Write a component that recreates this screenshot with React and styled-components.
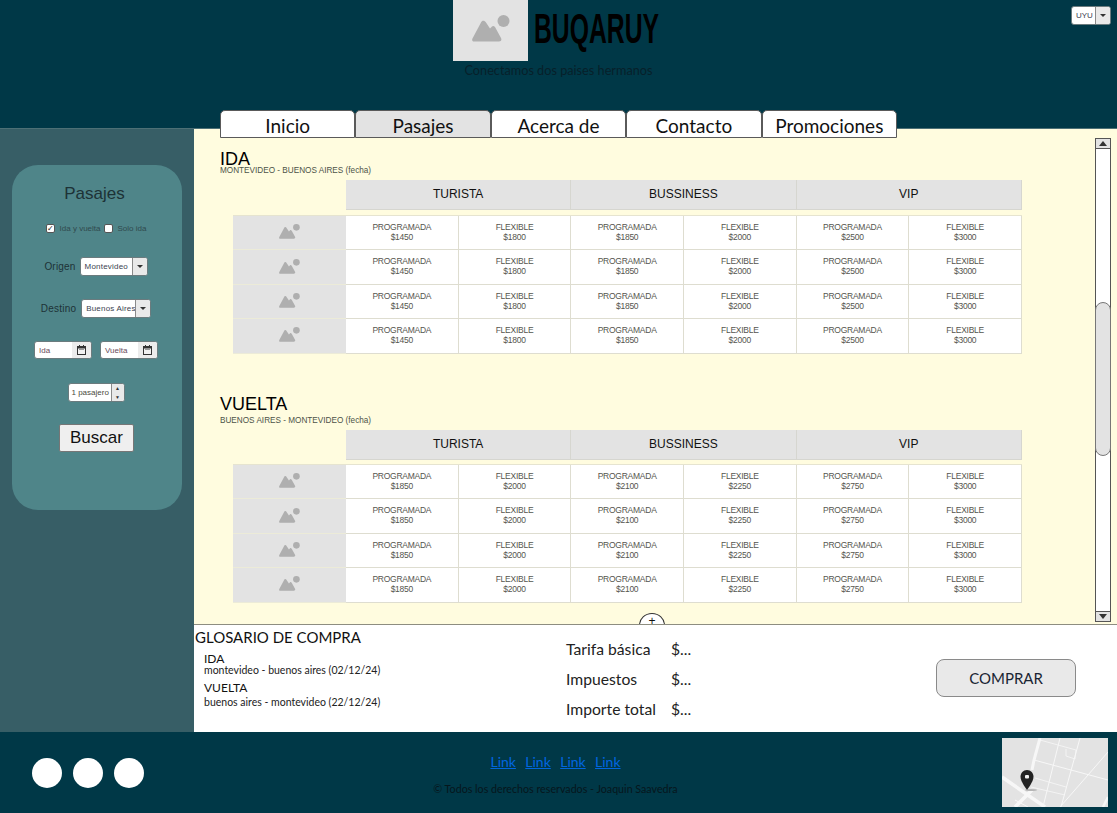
import React from "react";
import styled, { createGlobalStyle } from "styled-components";

const GlobalStyle = createGlobalStyle`
  html, body {
    margin: 0;
    padding: 0;
    background: #ffffff;
  }
  * {
    box-sizing: border-box;
  }
`;

const SPARTAN = `"Lato", "Noto Sans", sans-serif`;
const ARIAL = `"Liberation Sans", Arial, sans-serif`;

const Page = styled.div`
  width: 1117px;
  height: 813px;
  display: grid;
  grid-template-rows: 129px 603px 81px;
  overflow: hidden;
`;

const Header = styled.header`
  position: relative;
  background: #003847;
  border-bottom: 1px solid #4d7076;
  display: flex;
  flex-direction: column;
  align-items: center;
`;
const Brand = styled.div`
  display: flex;
  margin-right: 4px;
  height: 61px;
`;
const LogoBox = styled.div`
  width: 75px;
  height: 61px;
  background: #e3e3e3;
  display: flex;
  align-items: center;
  justify-content: center;
  padding: 0 0 4px 1px;
`;
const BrandName = styled.div`
  font-family: ${ARIAL};
  font-weight: 700;
  font-size: 43px;
  line-height: 57px;
  color: #000;
  margin-left: 6px;
  width: 126px;
  white-space: nowrap;
  transform: scaleX(0.575);
  transform-origin: left center;
`;
const Slogan = styled.div`
  font-family: ${SPARTAN};
  font-size: 12.7px;
  line-height: 14px;
  margin-top: 2px;
  color: #07202a;
`;
const Tabs = styled.nav`
  position: absolute;
  left: 220px;
  bottom: -10px;
  display: flex;
  z-index: 2;
`;
const Tab = styled.div`
  width: 135.4px;
  height: 28px;
  background: ${(p) => (p.$active ? "#e3e3e3" : "#ffffff")};
  border: 1px solid #5a5a5a;
  border-radius: 5px 5px 0 0;
  font-family: ${SPARTAN};
  font-size: 19px;
  line-height: 29px;
  text-align: center;
  color: #111;
`;
const SelectBox = styled.div`
  display: inline-flex;
  height: 19px;
  width: ${(p) => p.$w}px;
  border: 1px solid #6b7b7e;
  border-radius: 3px;
  background: #fff;
  overflow: hidden;
  font-family: ${ARIAL};
  font-size: 8px;
  color: #3b3f50;
`;
const SelectText = styled.span`
  flex: 1;
  min-width: 0;
  white-space: nowrap;
  overflow: hidden;
  padding-left: 4px;
  line-height: 17px;
`;
const SelectArrow = styled.span`
  width: 15px;
  flex: none;
  background: #e9e9e9;
  border-left: 1px solid #8a8a8a;
  display: flex;
  align-items: center;
  justify-content: center;
  &::after {
    content: "";
    border-left: 3px solid transparent;
    border-right: 3px solid transparent;
    border-top: 3px solid #333;
  }
`;
const Currency = styled.div`
  position: absolute;
  top: 6px;
  right: 6px;
  display: flex;
`;

const Middle = styled.div`
  display: grid;
  grid-template-columns: 194px 1fr;
  min-height: 0;
`;
const Aside = styled.aside`
  background: #375e66;
  padding: 36px 12px 0;
`;
const SearchCard = styled.div`
  height: 345px;
  background: #4f8589;
  border-radius: 26px;
  padding-right: 2px;
  display: flex;
  flex-direction: column;
  align-items: center;
  font-family: ${ARIAL};
  color: #1d3236;
`;
const CardTitle = styled.div`
  font-size: 17px;
  line-height: 20px;
  margin: 19px 3px 0 0;
`;
const TripType = styled.div`
  display: flex;
  align-items: center;
  font-size: 8px;
  margin-top: 19px;
  height: 10px;
  color: #2f4a4e;
`;
const CheckBox = styled.span`
  width: 9px;
  height: 9px;
  border: 1px solid #555;
  border-radius: 2px;
  background: #fff;
  font-size: 8px;
  line-height: 7px;
  text-align: center;
  color: #222;
  margin: 0 5px 0 ${(p) => p.$before || 0}px;
`;
const FieldRow = styled.div`
  display: flex;
  align-items: center;
  gap: ${(p) => p.$gap || 4}px;
  font-size: 10px;
  margin-top: ${(p) => p.$top}px;
  letter-spacing: 0.2px;
`;
const DateBox = styled.div`
  display: flex;
  align-items: center;
  width: 58px;
  height: 18px;
  border: 1px solid #6b7b7e;
  border-radius: 3px;
  background: #fff;
  overflow: hidden;
  font-size: 8px;
  color: #6a4a5a;
  letter-spacing: 0;
`;
const DateLabel = styled.span`
  flex: 1;
  padding-left: 4px;
`;
const DateIcon = styled.span`
  width: 19px;
  height: 100%;
  background: #ececec;
  display: flex;
  align-items: center;
  justify-content: center;
`;
const Spinner = styled.div`
  display: flex;
  width: 57px;
  height: 19px;
  border: 1px solid #6b7b7e;
  border-radius: 3px;
  background: #fff;
  overflow: hidden;
  font-size: 8px;
  line-height: 17px;
  color: #4a4a40;
  letter-spacing: 0;
`;
const SpinnerText = styled.span`
  flex: 1;
  padding-left: 3px;
  white-space: nowrap;
`;
const SpinnerArrows = styled.span`
  width: 13px;
  background: #e9e9e9;
  border-left: 1px solid #8a8a8a;
  display: grid;
  grid-template-rows: 1fr 1fr;
  font-size: 5px;
  line-height: 8px;
  text-align: center;
  color: #333;
`;
const SearchButton = styled.div`
  width: 75px;
  height: 28px;
  margin-top: 22px;
  margin-left: 1px;
  background: #efefef;
  border: 1px solid #767676;
  border-radius: 2px;
  font-size: 17px;
  line-height: 26px;
  text-align: center;
  color: #111;
`;

const Main = styled.main`
  display: grid;
  grid-template-rows: 496px 107px;
  min-height: 0;
`;
const Content = styled.section`
  position: relative;
  background: #fffcdf;
  border-bottom: 1px solid #8d8d80;
  padding: 23px 0 0 26px;
  font-family: ${ARIAL};
  overflow: hidden;
`;
const TripSection = styled.div`
  height: 245px;
`;
const TripTitle = styled.div`
  font-size: 18px;
  line-height: 14px;
  color: #000;
`;
const TripRoute = styled.div`
  font-size: 8.2px;
  line-height: 9px;
  color: #4c5248;
  margin-top: ${(p) => p.$top}px;
`;
const ClassHeader = styled.div`
  display: grid;
  grid-template-columns: repeat(3, 225.3px);
  margin: 5px 0 0 126px;
  height: 29px;
`;
const ClassCell = styled.div`
  background: #e3e3e3;
  border-right: 1px solid #d6d6d0;
  border-bottom: 1px solid #d6d6d0;
  font-size: 12px;
  line-height: 29px;
  text-align: center;
  color: #111;
`;
const FareTable = styled.div`
  margin: ${(p) => p.$top}px 0 0 13px;
  width: 789px;
  border-top: 1px solid #e6e4d0;
`;
const FareRow = styled.div`
  display: grid;
  grid-template-columns: 113px repeat(6, 1fr);
  height: 34.4px;
`;
const RowImage = styled.div`
  background: #e3e3e3;
  border-bottom: 1px solid #ecebd8;
  display: flex;
  align-items: center;
  justify-content: center;
  padding-bottom: 2px;
`;
const FareCell = styled.div`
  background: #fff;
  border-right: 1px solid #deddd0;
  border-bottom: 1px solid #deddd0;
  font-size: 8.5px;
  letter-spacing: -0.25px;
  line-height: 10px;
  padding-top: 6px;
  text-align: center;
  color: #55554e;
`;
const Scrollbar = styled.div`
  position: absolute;
  top: 9px;
  left: 901px;
  width: 16px;
  height: 484px;
  background: #fff;
  border: 1px solid #555;
  display: flex;
  flex-direction: column;
  justify-content: space-between;
`;
const ScrollButton = styled.div`
  height: 10px;
  background: #e3e3e3;
  border-top: ${(p) => (p.$down ? "1px solid #555" : "0")};
  border-bottom: ${(p) => (p.$down ? "0" : "1px solid #555")};
  display: flex;
  align-items: center;
  justify-content: center;
  &::after {
    content: "";
    border-left: 4px solid transparent;
    border-right: 4px solid transparent;
    border-top: ${(p) => (p.$down ? "5px solid #333" : "0")};
    border-bottom: ${(p) => (p.$down ? "0" : "5px solid #333")};
  }
`;
const ScrollThumb = styled.div`
  position: absolute;
  top: 163px;
  left: -1px;
  width: 16px;
  height: 154px;
  border: 1px solid #777;
  border-radius: 8px;
  background: #e3e3e3;
`;
const MoreButton = styled.div`
  position: absolute;
  left: 445px;
  top: 484px;
  width: 26px;
  height: 24px;
  padding-top: 4px;
  border: 1px solid #333;
  border-radius: 50%;
  background: #fff;
  font-size: 12px;
  line-height: 6px;
  text-align: center;
  color: #111;
`;

const Summary = styled.section`
  background: #fff;
  display: grid;
  grid-template-columns: 372px 370px 1fr;
  font-family: ${SPARTAN};
  color: #111;
`;
const Glossary = styled.div`
  padding: 4px 0 0 1px;
`;
const GlossaryTitle = styled.div`
  font-size: 15px;
  line-height: 17px;
`;
const GlossaryList = styled.div`
  padding: 5px 0 0 9px;
`;
const LegName = styled.div`
  font-size: 12px;
  line-height: 15px;
`;
const LegDetail = styled.div`
  font-size: 10.5px;
  line-height: 11px;
  margin-top: ${(p) => p.$top}px;
  margin-bottom: 4px;
  color: #222;
`;
const Totals = styled.div`
  display: grid;
  grid-template-columns: 105px auto;
  grid-auto-rows: 30px;
  padding-top: 9px;
  font-size: 15.7px;
  line-height: 30px;
  color: #222;
`;
const BuyColumn = styled.div`
  display: flex;
  justify-content: flex-start;
  padding-top: 34px;
`;
const BuyButton = styled.div`
  width: 140px;
  height: 38px;
  background: #e9e9e9;
  border: 1px solid #8a8a8a;
  border-radius: 8px;
  font-size: 15px;
  line-height: 37px;
  text-align: center;
  color: #1a2533;
`;

const Footer = styled.footer`
  background: #003847;
  display: grid;
  grid-template-columns: 372px 1fr 115px;
  font-family: ${SPARTAN};
`;
const Socials = styled.div`
  display: flex;
  gap: 11px;
  padding: 26px 0 0 32px;
`;
const SocialDot = styled.span`
  width: 30px;
  height: 30px;
  border-radius: 50%;
  background: #fff;
`;
const FooterCenter = styled.div`
  text-align: center;
  padding-top: 21px;
  width: 370px;
`;
const FooterLinks = styled.div`
  display: flex;
  justify-content: center;
  gap: 9.4px;
  margin-left: -3px;
`;
const FooterLink = styled.a`
  font-size: 14px;
  line-height: 18px;
  color: #0066e0;
  text-decoration: underline;
`;
const Copyright = styled.div`
  font-size: 10.7px;
  line-height: 12px;
  margin: 12px 0 0 -3px;
  color: #06161c;
`;
const MapBox = styled.div`
  width: 106px;
  height: 69px;
  margin-top: 6px;
  background: #e3e3e3;
  overflow: hidden;
  line-height: 0;
`;

const PlaceholderIcon = ({ width, color = "#afafaf" }) => (
  <svg width={width} viewBox="0 0 38 27" fill={color}>
    <circle cx="31.5" cy="6" r="6" />
    <path d="M1 22.5 9 7.500C10 5 12.500 5 14 7.500l4 6 2-2c1-1 2-.5 3 .5l6 11c1 2 0 3.500-2 3.500H2c-2 0-2.500-2-1-4z" />
  </svg>
);

const CalendarIcon = () => (
  <svg width="9" height="10" viewBox="0 0 9 10">
    <rect x="0" y="1" width="9" height="9" fill="#333" />
    <rect x="1" y="3.500" width="7" height="5.500" fill="#f1f1f1" />
    <rect x="2" y="0" width="1" height="2" fill="#333" />
    <rect x="6" y="0" width="1" height="2" fill="#333" />
    <rect x="2" y="4" width="5" height="1" fill="#999" />
  </svg>
);

const MapDrawing = () => (
  <svg width="106" height="69" viewBox="0 0 106 69">
    <g fill="none" stroke="#f7f7f7">
      <path d="M38 0 32 22 30 32" strokeWidth="3" />
      <path d="M0 39 43 69" strokeWidth="3.500" />
      <path d="M13 69 30 52" strokeWidth="3.500" />
      <path d="M101 69 106 59" strokeWidth="2.500" />
      <path d="M58 0 41 69" strokeWidth="1" />
      <path d="M78 0 59 69" strokeWidth="1" />
      <path d="M32 22 106 42" strokeWidth="1" />
      <path d="M38 2 74 12M64 11 64 18 73 21 74 12" strokeWidth="0.800" />
      <path d="M33 40 64 49M29 49 63 57" strokeWidth="0.800" />
      <path d="M58 69 86 37 106 14" strokeWidth="1" />
      <path d="M13 62 26 69" strokeWidth="1" />
    </g>
    <ellipse cx="29" cy="52" rx="6" ry="1" fill="#b5b5b5" />
    <path
      d="M25 32c-3.800 0-6.500 3-6.500 6.800 0 5 6.500 13.200 6.500 13.200s6.500-8.200 6.500-13.200c0-3.800-2.700-6.800-6.500-6.800z"
      fill="#222"
    />
    <rect x="23" y="37" width="4" height="3.500" rx="1" fill="#f1f1f1" />
  </svg>
);

const Select = ({ width, label }) => (
  <SelectBox $w={width}>
    <SelectText>{label}</SelectText>
    <SelectArrow />
  </SelectBox>
);

const CLASSES = ["TURISTA", "BUSSINESS", "VIP"];
const IDA_PRICES = [1450, 1800, 1850, 2000, 2500, 3000];
const VUELTA_PRICES = [1850, 2000, 2100, 2250, 2750, 3000];

const Trip = ({ title, route, routeTop, tableTop, prices }) => (
  <TripSection>
    <TripTitle>{title}</TripTitle>
    <TripRoute $top={routeTop}>{route} (fecha)</TripRoute>
    <ClassHeader>
      {CLASSES.map((name) => (
        <ClassCell key={name}>{name}</ClassCell>
      ))}
    </ClassHeader>
    <FareTable $top={tableTop}>
      {[0, 1, 2, 3].map((row) => (
        <FareRow key={row}>
          <RowImage>
            <PlaceholderIcon width={21} />
          </RowImage>
          {prices.map((price, idx) => (
            <FareCell key={idx}>
              {idx % 2 === 0 ? "PROGRAMADA" : "FLEXIBLE"}
              <br />${price}
            </FareCell>
          ))}
        </FareRow>
      ))}
    </FareTable>
  </TripSection>
);

export default function App() {
  return (
    <>
      <GlobalStyle />
      <Page>
        <Header>
          <Brand>
            <LogoBox>
              <PlaceholderIcon width={38} />
            </LogoBox>
            <BrandName>BUQARUY</BrandName>
          </Brand>
          <Slogan>Conectamos dos paises hermanos</Slogan>
          <Currency>
            <Select width={40} label="UYU" />
          </Currency>
          <Tabs>
            {["Inicio", "Pasajes", "Acerca de", "Contacto", "Promociones"].map(
              (tab) => (
                <Tab key={tab} $active={tab === "Pasajes"}>
                  {tab}
                </Tab>
              )
            )}
          </Tabs>
        </Header>
        <Middle>
          <Aside>
            <SearchCard>
              <CardTitle>Pasajes</CardTitle>
              <TripType>
                <CheckBox>✓</CheckBox>
                Ida y vuelta
                <CheckBox $before={3} />
                Solo ida
              </TripType>
              <FieldRow $top={24}>
                Origen
                <Select width={68} label="Montevideo" />
              </FieldRow>
              <FieldRow $top={23} $gap={5}>
                Destino
                <Select width={70} label="Buenos Aires" />
              </FieldRow>
              <FieldRow $top={23} $gap={8}>
                <DateBox>
                  <DateLabel>Ida</DateLabel>
                  <DateIcon>
                    <CalendarIcon />
                  </DateIcon>
                </DateBox>
                <DateBox>
                  <DateLabel>Vuelta</DateLabel>
                  <DateIcon>
                    <CalendarIcon />
                  </DateIcon>
                </DateBox>
              </FieldRow>
              <FieldRow $top={24}>
                <Spinner>
                  <SpinnerText>1 pasajero</SpinnerText>
                  <SpinnerArrows>
                    <span>▲</span>
                    <span>▼</span>
                  </SpinnerArrows>
                </Spinner>
              </FieldRow>
              <SearchButton>Buscar</SearchButton>
            </SearchCard>
          </Aside>
          <Main>
            <Content>
              <Trip
                title="IDA"
                route="MONTEVIDEO - BUENOS AIRES"
                routeTop={0}
                tableTop={6}
                prices={IDA_PRICES}
              />
              <Trip
                title="VUELTA"
                route="BUENOS AIRES - MONTEVIDEO"
                routeTop={5}
                tableTop={5}
                prices={VUELTA_PRICES}
              />
              <Scrollbar>
                <ScrollButton />
                <ScrollThumb />
                <ScrollButton $down />
              </Scrollbar>
              <MoreButton>+</MoreButton>
            </Content>
            <Summary>
              <Glossary>
                <GlossaryTitle>GLOSARIO DE COMPRA</GlossaryTitle>
                <GlossaryList>
                  <LegName>IDA</LegName>
                  <LegDetail $top={-1}>montevideo - buenos aires (02/12/24)</LegDetail>
                  <LegName>VUELTA</LegName>
                  <LegDetail $top={2}>buenos aires - montevideo (22/12/24)</LegDetail>
                </GlossaryList>
              </Glossary>
              <Totals>
                <span>Tarifa básica</span>
                <span>$...</span>
                <span>Impuestos</span>
                <span>$...</span>
                <span>Importe total</span>
                <span>$...</span>
              </Totals>
              <BuyColumn>
                <BuyButton>COMPRAR</BuyButton>
              </BuyColumn>
            </Summary>
          </Main>
        </Middle>
        <Footer>
          <Socials>
            <SocialDot />
            <SocialDot />
            <SocialDot />
          </Socials>
          <FooterCenter>
            <FooterLinks>
              <FooterLink>Link</FooterLink>
              <FooterLink>Link</FooterLink>
              <FooterLink>Link</FooterLink>
              <FooterLink>Link</FooterLink>
            </FooterLinks>
            <Copyright>© Todos los derechos reservados - Joaquin Saavedra</Copyright>
          </FooterCenter>
          <MapBox>
            <MapDrawing />
          </MapBox>
        </Footer>
      </Page>
    </>
  );
}
